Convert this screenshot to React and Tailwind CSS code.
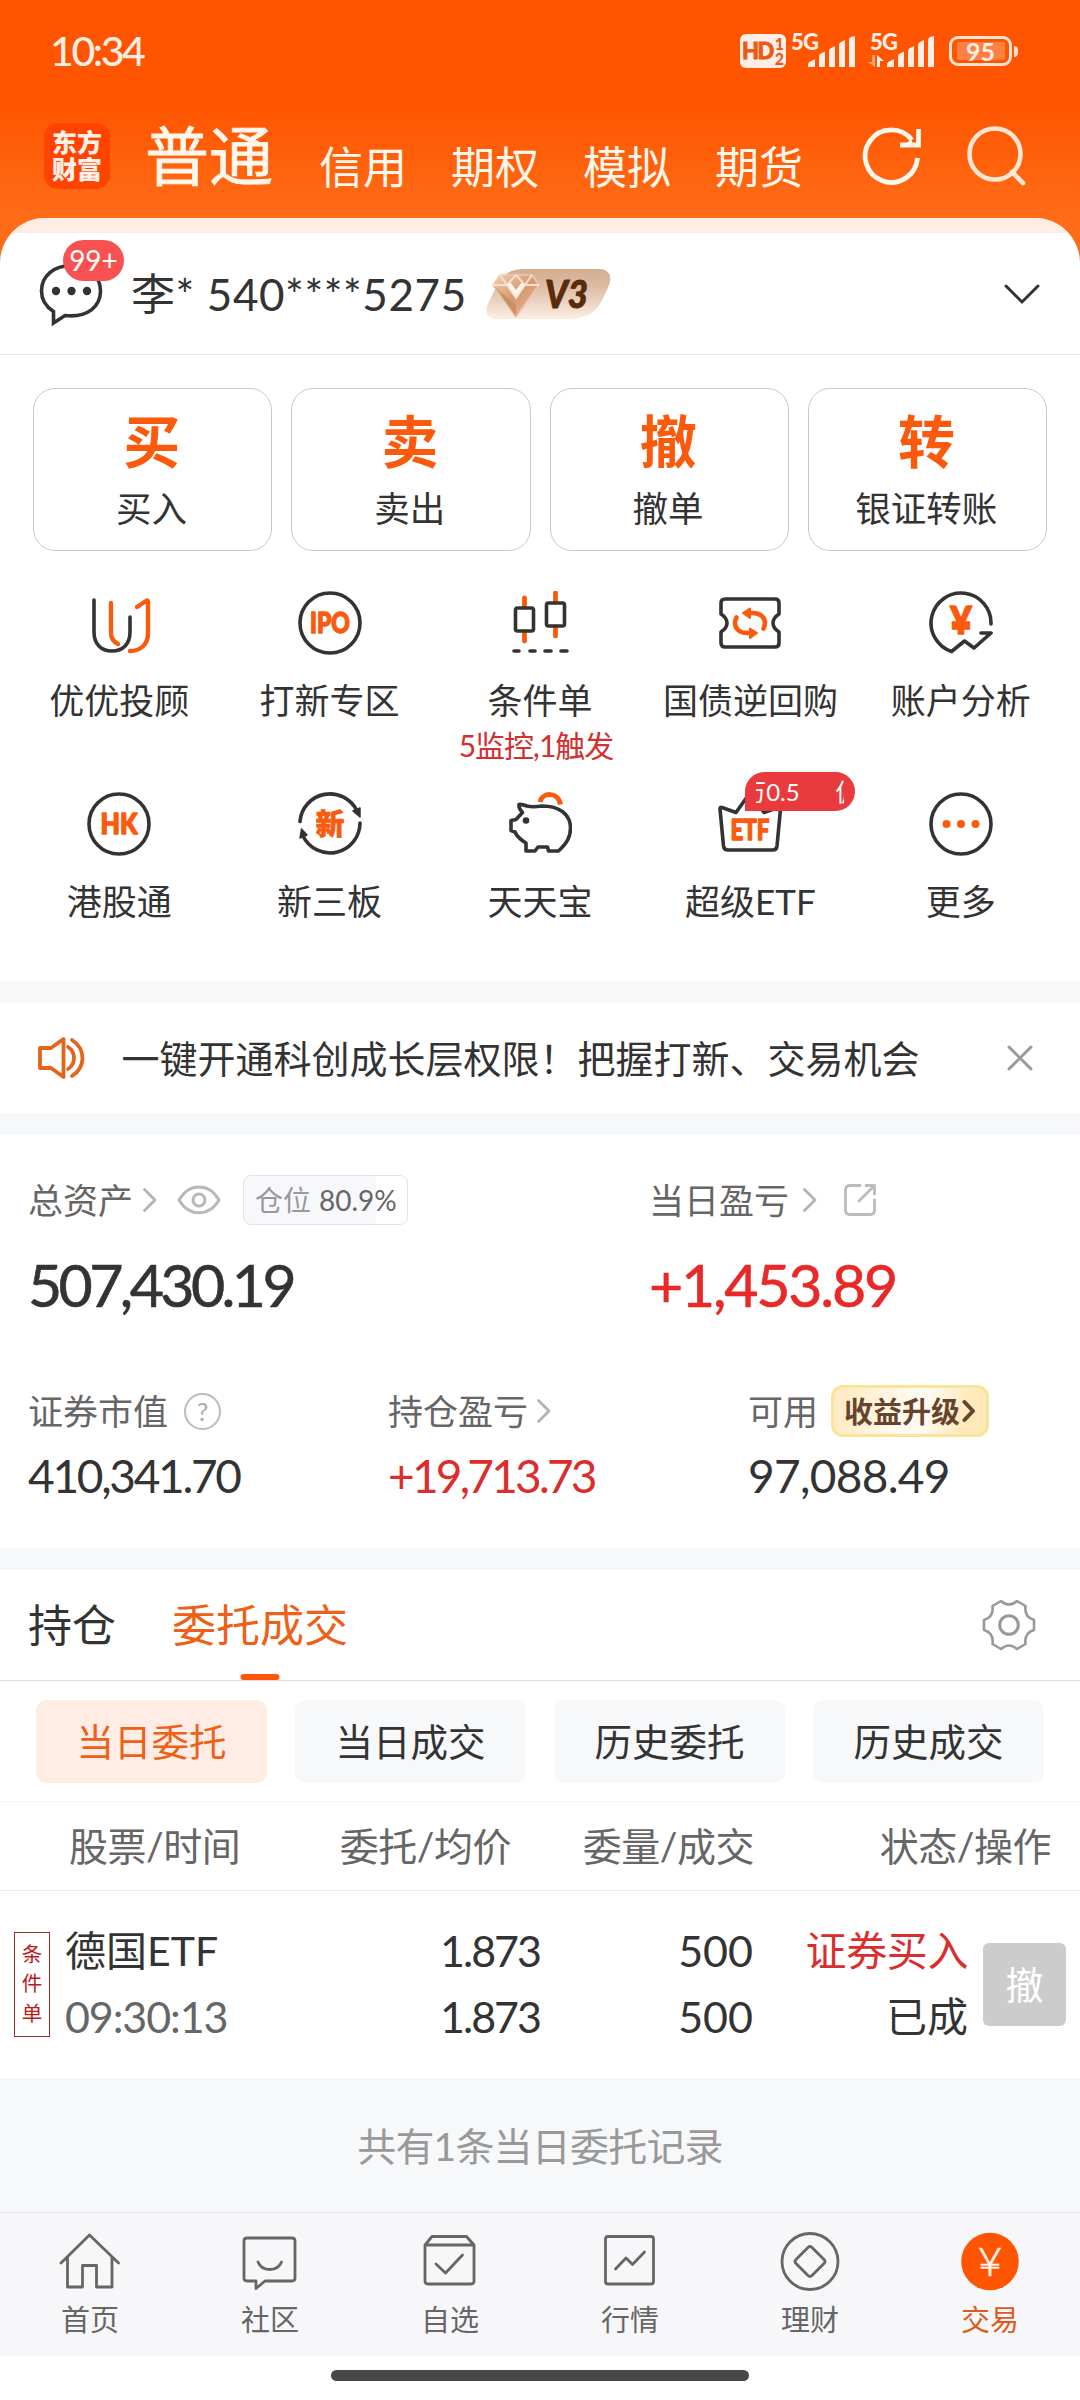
/**
 * TradePage — Brokerage account screen
 *
 * Top tabs, account header, quick actions, asset summary,
 * today's orders and the bottom navigation.
 */

const ORANGE = "#f95a0d";
const DARK = "#333333";

const TOP_TABS = ["信用", "期权", "模拟", "期货"];

const ACTIONS = [
  { mark: "买", label: "买入" },
  { mark: "卖", label: "卖出" },
  { mark: "撤", label: "撤单" },
  { mark: "转", label: "银证转账" },
];

const ORDER_FILTERS = ["当日委托", "当日成交", "历史委托", "历史成交"];

function Icon({ children, size = 64, className = "" }) {
  return (
    <svg
      width={size}
      height={size}
      viewBox="0 0 64 64"
      fill="none"
      stroke={DARK}
      strokeWidth="3.6"
      strokeLinecap="round"
      strokeLinejoin="round"
      className={`shrink-0 ${className}`}
    >
      {children}
    </svg>
  );
}

function IconText({ children, size, length, y, weight = 1.4 }) {
  return (
    <text
      x="32"
      y={y}
      textAnchor="middle"
      textLength={length}
      lengthAdjust="spacingAndGlyphs"
      fontSize={size}
      fontWeight="900"
      fill={ORANGE}
      stroke={ORANGE}
      strokeWidth={weight}
    >
      {children}
    </text>
  );
}

function AdvisorIcon() {
  return (
    <Icon>
      <path d="M7 9v32c0 12 7 19 18 19s18-7 18-19V26" />
      <path d="M24 12v30c0 5 3 9 7 11" stroke={ORANGE} strokeWidth="4.4" />
      <path d="M50 16l9-6c1.500-1 2 0 2 1v31c0 12-8 18-18 18" stroke={ORANGE} strokeWidth="4.4" />
    </Icon>
  );
}

function IpoIcon() {
  return (
    <Icon>
      <circle cx="32" cy="32" r="30" />
      <IconText size="28" length="40" y="42">IPO</IconText>
    </Icon>
  );
}

function CandleIcon() {
  return (
    <Icon>
      <path d="M16.500 7v9M16.500 41v9M47.500 2v9M47.500 36v9" stroke={ORANGE} strokeWidth="4.8" />
      <rect x="7.500" y="17" width="18" height="23" rx="2" />
      <rect x="38.500" y="12" width="18" height="23" rx="2" />
      <path d="M6 60h5M22 60h5M37 60h6M53 60h6" />
    </Icon>
  );
}

function RepoIcon() {
  return (
    <Icon>
      <path d="M7 8h50q4 0 4 4v11q-6 4-6 9t6 9v11q0 4-4 4H7q-4 0-4-4V41q6-4 6-9t-6-9V12q0-4 4-4z" />
      <g stroke={ORANGE} strokeWidth="4.600">
        <path d="M30 22h5c8 0 12 5 12 10 0 2-.6 4-1.500 5.500" />
        <path d="M34 42h-5c-8 0-12-5-12-10 0-2 .6-4 1.500-5.500" />
      </g>
      <path d="M25 22l7-4.500v9.500zM39 42l-7-4.500v9.500z" fill={ORANGE} stroke={ORANGE} strokeWidth="2" />
    </Icon>
  );
}

function AnalysisIcon() {
  return (
    <Icon>
      <path d="M62 33A30 30 0 1 0 22.500 60.500L35.500 50l9.500 7L62 42H52" />
      <IconText size="37" length="22" y="43">¥</IconText>
    </Icon>
  );
}

function HkIcon() {
  return (
    <Icon>
      <circle cx="32" cy="32" r="30" />
      <IconText size="28" length="37" y="42">HK</IconText>
    </Icon>
  );
}

function NeeqIcon() {
  return (
    <Icon>
      <path d="M2 29.500A30 30 0 0 1 59 19M62 31A30 30 0 0 1 5 44" />
      <path d="M55 19l7-3v9zM9 43l-7 3 1.500-9z" fill={DARK} strokeWidth="1.500" />
      <IconText size="29" length="29" y="43" weight={0.6}>新</IconText>
    </Icon>
  );
}

function PiggyIcon() {
  return (
    <Icon>
      <path d="M32 10c2-9.500 18-11 20.500 2.500" stroke={ORANGE} strokeWidth="5" strokeLinecap="butt" />
      <path d="M34 14c-7 1-11 1-15 0-4-1.500-6-2-8-1.500-.5 3 1 5.500 3.500 8L8 27.500l-5 1v10l4 1.500c2 5 6 8 11 11v8h9l3-4h9.500l1 4h10C59 51 62.500 45 62.500 36 62.500 22 51 14 34 14z" />
      <circle cx="18" cy="28.500" r="3.300" fill={DARK} stroke="none" />
    </Icon>
  );
}

function EtfIcon() {
  return (
    <Icon>
      <path d="M2 17q0-2.500 2-1.500l14 5L29 5q3-3 6 0l11 15.500 14-5q2-1 2.500 1.500L59 54q-.5 4-4 4H10q-4 0-4.500-4z" />
      <IconText size="28" length="39" y="48">ETF</IconText>
    </Icon>
  );
}

function MoreIcon() {
  return (
    <Icon>
      <circle cx="32" cy="32" r="30" />
      <g fill={ORANGE} stroke="none">
        <circle cx="17.500" cy="32" r="4" />
        <circle cx="32" cy="32" r="4" />
        <circle cx="46.500" cy="32" r="4" />
      </g>
    </Icon>
  );
}

const SHORTCUTS = [
  { icon: AdvisorIcon, label: "优优投顾" },
  { icon: IpoIcon, label: "打新专区" },
  { icon: CandleIcon, label: "条件单", note: "5监控,1触发" },
  { icon: RepoIcon, label: "国债逆回购" },
  { icon: AnalysisIcon, label: "账户分析" },
  { icon: HkIcon, label: "港股通" },
  { icon: NeeqIcon, label: "新三板" },
  { icon: PiggyIcon, label: "天天宝" },
  { icon: EtfIcon, label: "超级ETF", promo: true },
  { icon: MoreIcon, label: "更多" },
];

const NAV_ITEMS = [
  {
    label: "首页",
    drawing: <path d="M3 34L31.500 6 60.500 34M9.500 28v30h15V36.500h14V58H54V28" />,
  },
  {
    label: "社区",
    drawing: (
      <path d="M9 9h45q3 0 3 3v37q0 3-3 3H27l-9 7.500V52H9q-3 0-3-3V12q0-3 3-3zM20 33c4 10 19.500 10 23.500 0" />
    ),
  },
  {
    label: "自选",
    drawing: (
      <path d="M7 16h49v36q0 3-3 3H10q-3 0-3-3zl7-8.500h34.500L56 16M18 35l9.500 9 17-18" />
    ),
  },
  {
    label: "行情",
    drawing: (
      <path d="M10 7.500h43q2.500 0 2.500 2.500v42.500q0 2.500-2.500 2.500H10q-2.500 0-2.500-2.500V10q0-2.500 2.500-2.500zM17.500 40L28 29l6.500 6.500 12-12.500" />
    ),
  },
  {
    label: "理财",
    drawing: (
      <>
        <circle cx="32" cy="32.500" r="28" />
        <path d="M30 18.500q2-2 4 0l12 12q2 2 0 4l-12 12q-2 2-4 0l-12-12q-2-2 0-4z" />
      </>
    ),
  },
  { label: "交易", active: true },
];

function Chevron({ className = "" }) {
  return (
    <svg width="14" height="24" viewBox="0 0 14 24" fill="none" stroke="#b3b3b3" strokeWidth="2.800" strokeLinecap="round" strokeLinejoin="round" className={className}>
      <path d="M1.500 1.500L12 12 1.500 22.500" />
    </svg>
  );
}

function SignalBars() {
  return (
    <svg width="48" height="32" viewBox="0 0 48 32" fill="#ffeee5">
      <path d="M0 31v-2q0-3 3-4l4-2v8zM11 31V20q0-2 2-2.500l4-2V31zM21 31V15q0-2 2-3l4-2v21zM31 31V9q0-2 2-3l4-2v27zM41 31V4q0-2 2-3l4-1v31z" />
    </svg>
  );
}

function StatusBar() {
  return (
    <div className="flex h-[104px] items-center pb-[2px] pl-[50px] pr-[62px] text-[#ffeee5]">
      <span className="pb-[2px] text-[41px] font-medium leading-none tracking-[-2.400px]">10:34</span>
      <div className="ml-auto flex items-center">
        <div className="flex h-[34px] w-[46px] items-center justify-center rounded-[6px] bg-[#ffeee5] font-black text-[#e95a14]">
          <span className="text-[22px] leading-none tracking-[-1.500px] [-webkit-text-stroke:0.800px_#e95a14]">HD</span>
          <span className="ml-[2px] flex flex-col text-[16px] leading-[15px]">
            <span>1</span>
            <span>2</span>
          </span>
        </div>
        <div className="relative ml-[22px] h-[34px] w-[48px] pt-[2px]">
          <span className="absolute left-[-17px] top-0 text-[22px] font-black leading-[16px] tracking-[-0.800px]">5G</span>
          <SignalBars />
        </div>
        <div className="relative ml-[31px] h-[34px] w-[48px] pt-[2px]">
          <span className="absolute left-[-17px] top-0 text-[22px] font-black leading-[16px] tracking-[-0.800px]">5G</span>
          <svg width="16" height="12" viewBox="0 0 16 12" fill="#ffeee5" className="absolute left-[-19px] top-[21px]">
            <path d="M4 0h3v12L0 7h4z" opacity=".5" />
            <path d="M9 0l7 6h-4v6H9z" />
          </svg>
          <SignalBars />
        </div>
        <div className="ml-[14px] flex h-[30px] w-[63px] items-center justify-center rounded-[9px] border-[3px] border-[#ffe1d1] p-[3px]">
          <div className="flex h-full w-[48px] items-center justify-center rounded-[2px] bg-[#ff8042] text-[25px] font-bold leading-none">
            95
          </div>
        </div>
        <div className="ml-[2px] h-[11px] w-[4px] rounded-r bg-[#ffe1d1]" />
      </div>
    </div>
  );
}

function TopTabs() {
  return (
    <div className="flex h-[104px] pl-[44px] text-[#fff6ec]">
      <div className="mt-[19px] flex h-[66px] w-[66px] flex-col items-center justify-center rounded-[14px] bg-[#ff4402] text-[25px] font-black leading-[27px] text-[#fff1e8]">
        <span>东方</span>
        <span>财富</span>
      </div>
      <div className="ml-[35px] mt-[20px] text-[64px] leading-[64px] [-webkit-text-stroke:0.800px_#fff6ec]">普通</div>
      <div className="ml-[46px] mt-[41px] flex gap-[44px] text-[44px] leading-[44px]">
        {TOP_TABS.map((tab) => (
          <span key={tab}>{tab}</span>
        ))}
      </div>
      <svg width="60" height="60" viewBox="0 0 60 60" fill="none" stroke="currentColor" strokeWidth="4.800" className="ml-[59px] mt-[22px]">
        <path d="M55.500 32A26.200 26.200 0 1 1 50 14M56.500 3v16H38" />
        <path d="M50 12v7h-7z" fill="currentColor" stroke="none" />
      </svg>
      <svg width="62" height="62" viewBox="0 0 62 62" fill="none" stroke="#ffe6d3" strokeWidth="4.600" strokeLinecap="round" className="ml-[42px] mt-[21px]">
        <circle cx="31" cy="29" r="25.500" />
        <path d="M48 47l11 11" />
      </svg>
    </div>
  );
}

function LevelBadge() {
  return (
    <svg width="126" height="50" viewBox="0 0 126 50" className="ml-[19px]">
      <defs>
        <linearGradient id="level-bg" x1="0" y1="0" x2="0" y2="1">
          <stop offset="0" stopColor="#d3ad90" />
          <stop offset=".35" stopColor="#dcbca3" />
          <stop offset="1" stopColor="#fdeee4" />
        </linearGradient>
        <linearGradient id="gem" x1="0" y1="0" x2="1" y2="1">
          <stop offset="0" stopColor="#f3cdb2" />
          <stop offset=".5" stopColor="#d79a70" />
          <stop offset="1" stopColor="#e8c0a2" />
        </linearGradient>
      </defs>
      <path d="M38 0H112Q126 0 124 13Q122 20 115 33Q106 50 84 50H12Q-2 50 1 37L12 14Q20 0 38 0z" fill="url(#level-bg)" />
      <path d="M14 6h32l7 10-23 32L7 16z" fill="url(#gem)" stroke="#eec9ae" strokeWidth="1.500" />
      <path d="M14 6l7 10 9 13 9-13 7-10M7 16h14M39 16h14M21 16l9-10 9 10" fill="none" stroke="#f8dfcd" strokeWidth="2" />
      <path d="M21 15l9 13 9-13-4-1-5 7-5-7z" fill="#fff7ef" />
      <path d="M7 16l23 32V36z" fill="#b8784e" opacity=".45" />
      <text x="59" y="39" fontSize="38" fontWeight="900" fontStyle="italic" fill="#5b2b0b" stroke="#5b2b0b" strokeWidth="1" textLength="43" lengthAdjust="spacingAndGlyphs">
        V3
      </text>
    </svg>
  );
}

function AccountRow() {
  return (
    <div className="flex h-[122px] items-center border-b border-[#e6e6e6] pl-[39px] pr-[40px]">
      <div className="relative">
        <Icon>
          <path d="M14.500 49.500C6 44 2.500 37 2.500 29 2.500 14 15 3.500 32 3.500S61.500 14 61.500 29 49 56 26 53.500L14.500 61z" strokeLinejoin="miter" />
          <g fill={DARK} stroke="none">
            <circle cx="17" cy="29" r="4.200" />
            <circle cx="32.500" cy="29" r="4.200" />
            <circle cx="48" cy="29" r="4.200" />
          </g>
        </Icon>
        <span className="absolute left-[24px] top-[-22px] flex h-[41px] w-[61px] items-center justify-center rounded-full bg-[#f85152] text-[28px] leading-none text-white">
          99+
        </span>
      </div>
      <span className="ml-[28px] whitespace-pre text-[44px] leading-none tracking-[0.600px] text-[#333]">李* 540****5275</span>
      <LevelBadge />
      <svg width="36" height="22" viewBox="0 0 36 22" fill="none" stroke={DARK} strokeWidth="3" strokeLinecap="round" className="ml-auto">
        <path d="M2 3l16 16L34 3" />
      </svg>
    </div>
  );
}

function Shortcut({ icon: Glyph, label, note, promo }) {
  return (
    <div className="relative flex h-[201px] flex-col items-center">
      <Glyph />
      <span className="mt-[28px] whitespace-nowrap text-[35px] leading-[35px] text-[#333]">{label}</span>
      {note && (
        <span className="mr-[8px] mt-[12px] whitespace-nowrap text-[30px] leading-[30px] tracking-[-1px] text-[#d3302f]">
          {note}
        </span>
      )}
      {promo && (
        <span className="absolute left-[100px] top-[-20px] flex h-[39px] w-[110px] items-center rounded-[20px] rounded-bl-none bg-[#e93b3d] px-[11px]">
          <span className="flex w-full justify-start overflow-hidden whitespace-nowrap text-[24px] leading-[30px] text-white">
            <span className="-ml-[14px]">万0.5</span>
            <span className="ml-[36px]">佣金</span>
          </span>
        </span>
      )}
    </div>
  );
}

function QuickActions() {
  return (
    <section className="h-[626px]">
      <div className="grid grid-cols-4 gap-[19px] px-[33px] pt-[33px]">
        {ACTIONS.map((action) => (
          <div key={action.label} className="flex h-[163px] flex-col items-center rounded-[22px] border border-[#c9c9c9] pr-[2px] pt-[24px]">
            <span className="text-[57px] font-bold leading-[57px] text-[#fb5a0c]">{action.mark}</span>
            <span className="mt-[21px] text-[35.5px] leading-[36px] text-[#333]">{action.label}</span>
          </div>
        ))}
      </div>
      <div className="grid grid-cols-5 px-[14px] pt-[40px]">
        {SHORTCUTS.map((item) => (
          <Shortcut key={item.label} {...item} />
        ))}
      </div>
    </section>
  );
}

function Notice() {
  return (
    <section className="my-[22px] flex h-[110px] items-center bg-white pl-[36px] pr-[46px]">
      <svg width="50" height="44" viewBox="0 0 50 44" fill="none" stroke="#e4641c" strokeWidth="3.800" strokeLinecap="round" strokeLinejoin="round">
        <path d="M4 12h11L27.500 3v38L15 32H4zM32 11c8 5 8 17 0 22M36 4c14 9 14 27 0 36" />
      </svg>
      <span className="ml-[35.5px] whitespace-nowrap text-[38px] leading-none text-[#333]">
        一键开通科创成长层权限！把握打新、交易机会
      </span>
      <svg width="28" height="28" viewBox="0 0 28 28" stroke="#999" strokeWidth="3" strokeLinecap="round" className="ml-auto">
        <path d="M3 3l22 22M25 3L3 25" />
      </svg>
    </section>
  );
}

function AssetSummary() {
  return (
    <section className="h-[413px] bg-white pl-[28px] pt-[40px] text-[#333]">
      <div className="flex">
        <div className="w-[621px]">
          <div className="flex h-[50px] items-center">
            <span className="text-[35px] leading-none text-[#666]">总资产</span>
            <Chevron className="ml-[10px]" />
            <svg width="44" height="32" viewBox="0 0 44 32" fill="none" stroke="#b8b8b8" strokeWidth="3" className="ml-[20px]">
              <path d="M2 16C12-1.500 32-1.500 42 16 32 33 12 33 2 16z" strokeLinejoin="round" />
              <circle cx="22" cy="16" r="6" />
            </svg>
            <div className="ml-[22px] flex h-[50px] w-[165px] items-center rounded-[8px] border border-[#e3e3e3] bg-[linear-gradient(90deg,#f7f8fb_80.9%,#fff_80.9%)] pl-[11px] text-[28px] leading-none">
              <span className="text-[#999]">仓位</span>
              <span className="ml-[8px] text-[#666]">80.9%</span>
            </div>
          </div>
          <div className="mt-[30px] text-[59px] leading-[60px] tracking-[-3.600px] [-webkit-text-stroke:0.6px_#333]">507,430.19</div>
        </div>
        <div>
          <div className="flex h-[50px] items-center">
            <span className="text-[35px] leading-none text-[#666]">当日盈亏</span>
            <Chevron className="ml-[14px]" />
            <svg width="34" height="34" viewBox="0 0 34 34" fill="none" stroke="#bbb" strokeWidth="2.800" strokeLinecap="round" strokeLinejoin="round" className="ml-[26px]">
              <path d="M17 2.500H7Q2.500 2.500 2.500 7v20q0 4.500 4.500 4.500h20q4.500 0 4.500-4.500V17M16 18L31 3M23 2.500h8.500V11" />
            </svg>
          </div>
          <div className="mt-[30px] text-[59px] leading-[60px] tracking-[-2.200px] text-[#e92828] [-webkit-text-stroke:0.6px_#e92828]">+1,453.89</div>
        </div>
      </div>
      <div className="mt-[70px] flex">
        <div className="w-[360px]">
          <div className="flex h-[52px] items-center">
            <span className="text-[35px] leading-none text-[#666]">证券市值</span>
            <span className="ml-[16px] flex h-[37px] w-[37px] items-center justify-center rounded-full border-[2.5px] border-[#bbb] text-[25px] leading-none text-[#aaa]">
              ?
            </span>
          </div>
          <div className="mt-[16px] text-[46px] leading-[46px] tracking-[-2.300px]">410,341.70</div>
        </div>
        <div className="w-[360px]">
          <div className="flex h-[52px] items-center">
            <span className="text-[35px] leading-none text-[#666]">持仓盈亏</span>
            <Chevron className="ml-[9px]" />
          </div>
          <div className="mt-[16px] text-[46px] leading-[46px] tracking-[-2.800px] text-[#db2d2d]">+19,713.73</div>
        </div>
        <div>
          <div className="flex h-[52px] items-center">
            <span className="text-[35px] leading-none text-[#666]">可用</span>
            <div className="ml-[13px] flex h-[52px] w-[158px] items-center justify-center rounded-[12px] border-[3px] border-[#f9e59a] bg-[linear-gradient(105deg,#ffecc6_8%,#fffaf0_48%,#fffaf0_60%,#ffe9b8_85%)]">
              <span className="text-[29px] font-bold leading-none text-[#66452f]">收益升级</span>
              <svg width="14" height="24" viewBox="0 0 14 24" fill="none" stroke="#66452f" strokeWidth="4" strokeLinecap="round" strokeLinejoin="round" className="ml-[2px]">
                <path d="M2.500 3L11 12l-8.500 9" />
              </svg>
            </div>
          </div>
          <div className="mt-[16px] text-[46px] leading-[46px] tracking-[-0.700px]">97,088.49</div>
        </div>
      </div>
    </section>
  );
}

function OrderPanel() {
  return (
    <section className="mt-[22px] bg-white text-[#333]">
      <div className="flex h-[111px] items-center border-b border-[#dcdcdc] pl-[28px] pr-[44px] text-[44px] leading-none">
        <span>持仓</span>
        <div className="relative ml-[56px] flex h-full items-center text-[#ee5f17]">
          委托成交
          <span className="absolute bottom-0 left-1/2 h-[6px] w-[39px] -translate-x-1/2 rounded-full bg-[#fd560a]" />
        </div>
        <svg width="54" height="54" viewBox="-27 -27 54 54" fill="none" stroke="#999" strokeWidth="2.600" strokeLinejoin="round" className="ml-auto">
          <path d="M-8-24Q0-17 8-24L16.500-19Q15-8 25-5V5Q15 8 16.500 19L8 24Q0 17-8 24L-16.500 19Q-15 8-25 5V-5Q-15-8-16.500-19z" />
          <circle r="9.300" strokeWidth="3" />
        </svg>
      </div>

      <div className="grid h-[121px] grid-cols-4 gap-[28px] border-b border-[#f5f5f5] px-[36px] pt-[19px]">
        {ORDER_FILTERS.map((filter, i) => (
          <div
            key={filter}
            className={`flex h-[83px] items-center justify-center rounded-[11px] text-[37.5px] leading-none ${
              i === 0 ? "bg-[#ffede5] text-[#ee5f17]" : "bg-[#f7f8fa]"
            }`}
          >
            {filter}
          </div>
        ))}
      </div>

      <div className="flex h-[89px] items-center border-b border-[#ebebeb] text-[39px] leading-none tracking-[-0.500px] text-[#666]">
        <span className="w-[270px] whitespace-nowrap pl-[69px]">股票/时间</span>
        <span className="w-[241px] text-right">委托/均价</span>
        <span className="w-[243px] text-right">委量/成交</span>
        <span className="w-[297px] text-right">状态/操作</span>
      </div>

      <div className="flex h-[187px] items-center pb-[1px] text-[43px] leading-[66px]">
        <div className="ml-[14px] flex h-[105px] w-[36px] flex-col items-center justify-center border border-[#9b2a2a] text-[20.5px] leading-[29.500px] text-[#c01818]">
          <span>条</span>
          <span>件</span>
          <span>单</span>
        </div>
        <div className="ml-[15px] w-[205px]">
          <div className="whitespace-nowrap text-[41px]">德国ETF</div>
          <div className="tracking-[-1.100px] text-[#666]">09:30:13</div>
        </div>
        <div className="w-[270px] text-right tracking-[-2px]">
          <div>1.873</div>
          <div>1.873</div>
        </div>
        <div className="w-[213px] text-right">
          <div>500</div>
          <div>500</div>
        </div>
        <div className="w-[215px] text-right text-[41px]">
          <div className="tracking-[-0.400px] text-[#db2d2d]">证券买入</div>
          <div>已成</div>
        </div>
        <div className="ml-[15px] flex h-[83px] w-[83px] items-center justify-center rounded-[6px] bg-[#ccc] text-[38px] text-white">
          撤
        </div>
      </div>
    </section>
  );
}

function BottomNav() {
  return (
    <nav className="grid h-[144px] grid-cols-6 border-t border-[#e2e2e4] bg-[#f7f7f9]">
      {NAV_ITEMS.map((item) => (
        <div key={item.label} className="flex flex-col items-center pt-[16px]">
          {item.active ? (
            <svg width="64" height="64" viewBox="0 0 64 64">
              <circle cx="32" cy="32.500" r="28.800" fill="#ff5500" />
              <text x="32" y="47" textAnchor="middle" fontSize="39" fontWeight="300" fill="#fff3ea" stroke="#fff3ea" strokeWidth=".6" textLength="25" lengthAdjust="spacingAndGlyphs">
                ¥
              </text>
            </svg>
          ) : (
            <svg width="64" height="64" viewBox="0 0 64 64" fill="none" stroke="#666" strokeWidth="2.800" strokeLinecap="round" strokeLinejoin="round">
              {item.drawing}
            </svg>
          )}
          <span className={`mt-[12px] text-[29px] leading-[30px] ${item.active ? "text-[#dd5b1a]" : "text-[#666]"}`}>
            {item.label}
          </span>
        </div>
      ))}
    </nav>
  );
}

export default function App() {
  return (
    <div className="h-[2400px] w-[1080px] overflow-hidden bg-[#f7f8fa] font-['Lato','Noto_Sans_CJK_SC',sans-serif]">
      <div className="bg-[linear-gradient(180deg,#ff5500_0px,#ff5500_105px,#ff6c17_215px,#ff6c17_100%)]">
        <header className="h-[218px]">
          <StatusBar />
          <TopTabs />
        </header>
        <div className="overflow-hidden rounded-t-[45px] bg-white">
          <div className="h-[15px] bg-[#ffede4]" />
          <AccountRow />
          <QuickActions />
        </div>
      </div>
      <Notice />
      <AssetSummary />
      <OrderPanel />
      <div className="flex h-[134px] items-center justify-center pt-[2px] text-[39px] leading-none tracking-[-0.800px] text-[#999]">
        共有1条当日委托记录
      </div>
      <BottomNav />
      <div className="flex h-[44px] justify-center bg-white pt-[14px]">
        <div className="h-[11px] w-[418px] rounded-full bg-[#474747]" />
      </div>
    </div>
  );
}
